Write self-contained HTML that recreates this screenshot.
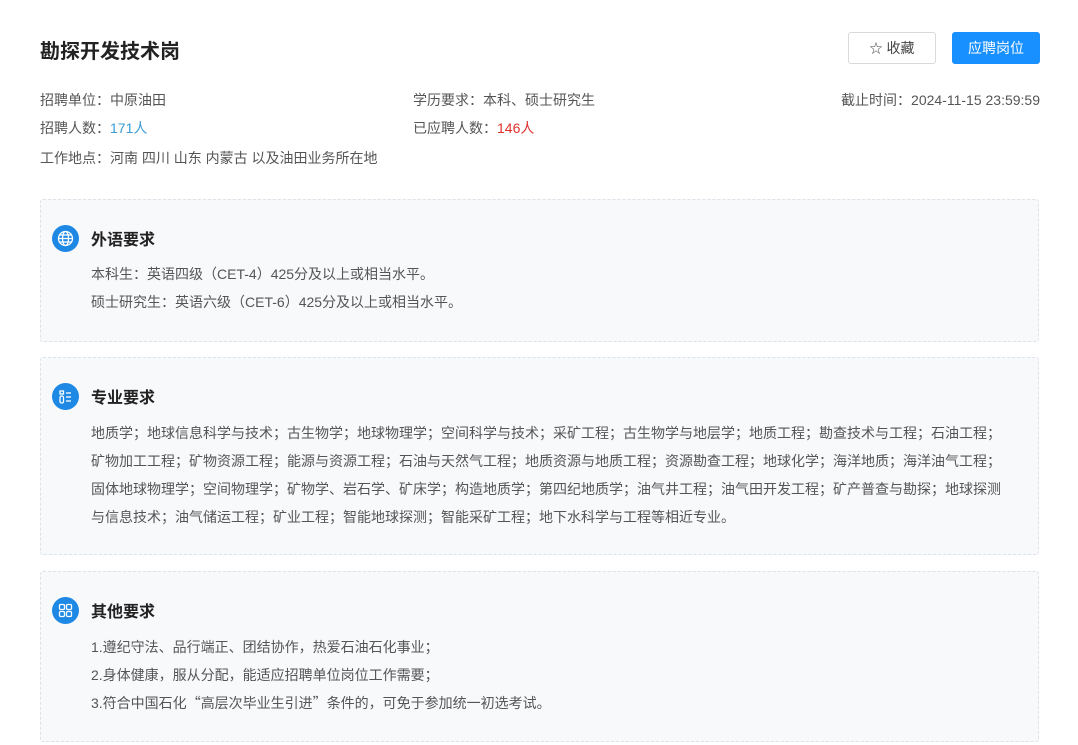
<!DOCTYPE html>
<html><head><meta charset="utf-8"><style>
*{margin:0;padding:0;box-sizing:border-box}
body{width:1078px;height:745px;background:#fff;font-family:"Liberation Sans","Noto Sans CJK SC",sans-serif;color:#555;font-size:14px;position:relative;overflow:hidden}
.abs{position:absolute;white-space:nowrap}
.cj{font-family:"Noto Sans CJK SC",sans-serif}
h1{position:absolute;left:40px;top:35px;font-size:20px;font-weight:bold;color:#222}
.btn{position:absolute;top:32px;height:32px;width:88px;border-radius:3px;font-size:14px;text-align:center;line-height:30px}
.b1{left:848px;border:1px solid #d9d9d9;color:#444;background:#fff}
.b2{left:952px;background:#1890ff;color:#fff;border:1px solid #1890ff}
.card{position:absolute;left:40px;width:999px;background:#f8f9fb;border:1px dashed #dde2e8;border-radius:3px}
.ic{position:absolute;left:11px;width:27px;height:27px;border-radius:50%;background:#1e88e5}
.ht{position:absolute;left:50px;font-size:16px;font-weight:bold;color:#222}
.tx{position:absolute;left:50px;line-height:28px;color:#555;white-space:nowrap}
</style></head><body>
<h1>勘探开发技术岗</h1>
<div class="btn b1"><span style="font-size:13px">☆</span> 收藏</div>
<div class="btn b2">应聘岗位</div>
<div class="abs" style="left:40px;top:90px">招聘单位：中原油田</div>
<div class="abs" style="left:413px;top:90px">学历要求：本科、硕士研究生</div>
<div class="abs" style="right:38px;top:90px">截止时间：2024-11-15 23:59:59</div>
<div class="abs" style="left:40px;top:118px">招聘人数：<span style="color:#3a9bd5">171人</span></div>
<div class="abs" style="left:413px;top:118px">已应聘人数：<span style="color:#e0302b">146人</span></div>
<div class="abs" style="left:40px;top:148px">工作地点：河南 四川 山东 内蒙古 以及油田业务所在地</div>

<div class="card" style="top:199px;height:143px">
<div class="ic" style="top:25px"><svg width="27" height="27" viewBox="0 0 27 27" fill="none" stroke="#fff" stroke-width="1.3"><circle cx="13.5" cy="13.5" r="7"/><ellipse cx="13.5" cy="13.5" rx="3" ry="7"/><line x1="6.5" y1="13.5" x2="20.5" y2="13.5"/><line x1="7.5" y1="10" x2="19.5" y2="10"/><line x1="7.5" y1="17" x2="19.5" y2="17"/></svg></div>
<div class="ht" style="top:26px">外语要求</div>
<div class="tx" style="top:60px">本科生：英语四级<span class="cj">（</span>CET-4<span class="cj">）</span>425分及以上或相当水平。<br>硕士研究生：英语六级<span class="cj">（</span>CET-6<span class="cj">）</span>425分及以上或相当水平。</div>
</div>

<div class="card" style="top:357px;height:198px">
<div class="ic" style="top:25px"><svg width="27" height="27" viewBox="0 0 27 27" fill="none" stroke="#fff" stroke-width="1.3"><rect x="8" y="8" width="3.5" height="3"/><rect x="8" y="13" width="3.5" height="7" rx="1.5"/><line x1="14" y1="10" x2="19" y2="10"/><line x1="14" y1="14" x2="19" y2="14"/><line x1="14" y1="18" x2="19" y2="18"/></svg></div>
<div class="ht" style="top:26px">专业要求</div>
<div class="tx" style="top:61px">地质学；地球信息科学与技术；古生物学；地球物理学；空间科学与技术；采矿工程；古生物学与地层学；地质工程；勘查技术与工程；石油工程；<br>矿物加工工程；矿物资源工程；能源与资源工程；石油与天然气工程；地质资源与地质工程；资源勘查工程；地球化学；海洋地质；海洋油气工程；<br>固体地球物理学；空间物理学；矿物学、岩石学、矿床学；构造地质学；第四纪地质学；油气井工程；油气田开发工程；矿产普查与勘探；地球探测<br>与信息技术；油气储运工程；矿业工程；智能地球探测；智能采矿工程；地下水科学与工程等相近专业。</div>
</div>

<div class="card" style="top:571px;height:171px">
<div class="ic" style="top:25px"><svg width="27" height="27" viewBox="0 0 27 27" fill="none" stroke="#fff" stroke-width="1.3"><rect x="7.5" y="7.5" width="5" height="5" rx="1.2"/><rect x="14.5" y="7.5" width="5" height="5" rx="1.2"/><rect x="7.5" y="14.5" width="5" height="5" rx="1.2"/><rect x="14.5" y="14.5" width="5" height="5" rx="1.2"/></svg></div>
<div class="ht" style="top:26px">其他要求</div>
<div class="tx" style="top:61px">1.遵纪守法、品行端正、团结协作，热爱石油石化事业；<br>2.身体健康，服从分配，能适应招聘单位岗位工作需要；<br>3.符合中国石化<span class="cj">“</span>高层次毕业生引进<span class="cj">”</span>条件的，可免于参加统一初选考试。</div>
</div>
</body></html>
